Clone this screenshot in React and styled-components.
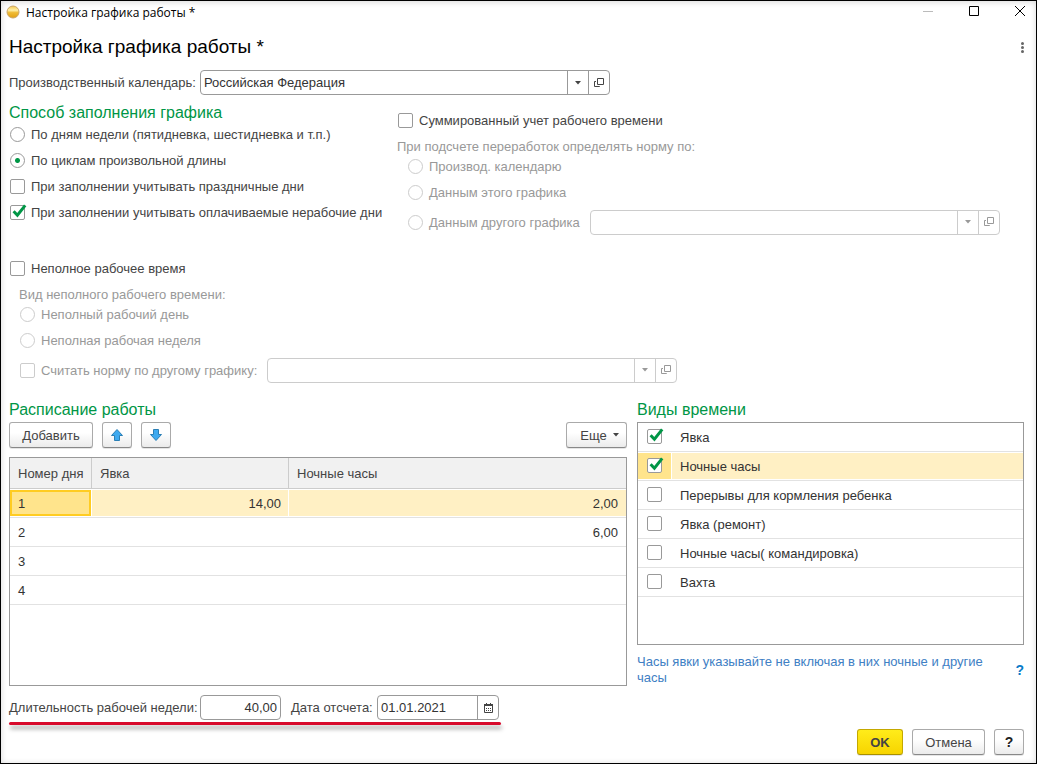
import React, { useState } from "react";
import styled, { createGlobalStyle } from "styled-components";

const initialDays = [
  { day: "1", work: "14,00", night: "2,00" },
  { day: "2", work: "", night: "6,00" },
  { day: "3", work: "", night: "" },
  { day: "4", work: "", night: "" },
];

const initialTypes = [
  { name: "Явка", checked: true },
  { name: "Ночные часы", checked: true },
  { name: "Перерывы для кормления ребенка", checked: false },
  { name: "Явка (ремонт)", checked: false },
  { name: "Ночные часы( командировка)", checked: false },
  { name: "Вахта", checked: false },
];

function CheckMark(props) {
  return (
    <Mark>
      <CheckInput type="checkbox" {...props} />
      <Tick viewBox="0 0 18 18" aria-hidden="true">
        <path d="M3.6 8.2 L7.4 12.2 L15.2 2.4" />
      </Tick>
    </Mark>
  );
}

function Check({ label, ...rest }) {
  return (
    <CheckLabel $disabled={rest.disabled}>
      <CheckMark {...rest} />
      {label}
    </CheckLabel>
  );
}

function Radio({ label, ...rest }) {
  return (
    <CheckLabel $disabled={rest.disabled}>
      <RadioInput type="radio" {...rest} />
      {label}
    </CheckLabel>
  );
}

function OpenIcon() {
  return (
    <svg width="10" height="10" viewBox="0 0 10 10" fill="none" stroke="currentColor">
      <path d="M3.5 0.5h6v6h-6z" />
      <path d="M2 3.5H0.5v5h5V8" />
    </svg>
  );
}

function CaretIcon() {
  return (
    <svg width="6" height="4" viewBox="0 0 6 4" fill="currentColor">
      <path d="M0 0h6L3 3.5z" />
    </svg>
  );
}

function CalendarIcon() {
  return (
    <svg width="9" height="10" viewBox="0 0 9 10" fill="none" stroke="currentColor">
      <path d="M0 1.5h9M0 2.5h9" />
      <path d="M2.5 0v2M6.5 0v2" />
      <path d="M0.5 2v7.5h8V2" />
      <path d="M2 5.5h5M2 7.5h5" strokeDasharray="1 1" />
    </svg>
  );
}

function ArrowIcon({ down }) {
  return (
    <svg width="14" height="14" viewBox="0 0 14 14">
      <path
        d={
          down
            ? "M4.5 1.5h5v5h3L7 12.5 1.5 6.5h3z"
            : "M4.5 12.5h5v-5h3L7 1.5 1.5 7.5h3z"
        }
        fill="#3eaaf0"
        stroke="#2b7fb5"
      />
    </svg>
  );
}

function RefField({ id, label, value, disabled }) {
  return (
    <Field $disabled={disabled}>
      <FieldInput
        id={id}
        aria-label={label}
        defaultValue={value}
        disabled={disabled}
      />
      <FieldButton aria-label="Выбрать из списка" disabled={disabled}>
        <CaretIcon />
      </FieldButton>
      <FieldButton aria-label="Открыть" disabled={disabled}>
        <OpenIcon />
      </FieldButton>
    </Field>
  );
}

export default function App() {
  const [mode, setMode] = useState("cycles");
  const [selectedDay, setSelectedDay] = useState(0);
  const [selectedType, setSelectedType] = useState(1);
  const [types, setTypes] = useState(initialTypes);

  const toggleType = (index) => {
    setSelectedType(index);
    setTypes(
      types.map((t, i) => (i === index ? { ...t, checked: !t.checked } : t))
    );
  };

  return (
    <Window>
      <GlobalStyle />
      <TitleBar>
        <Logo viewBox="0 0 14 14" aria-hidden="true">
          <defs>
            <linearGradient id="ball" x1="0" y1="0" x2="0" y2="1">
              <stop offset="0" stopColor="#f3c64c" />
              <stop offset="0.35" stopColor="#fff0a8" />
              <stop offset="0.55" stopColor="#efbb35" />
              <stop offset="1" stopColor="#e2a012" />
            </linearGradient>
          </defs>
          <circle cx="7" cy="7" r="6" fill="url(#ball)" stroke="#c9a56a" />
        </Logo>
        <TitleText>Настройка графика работы *</TitleText>
        <WindowButton aria-label="Свернуть" $muted>
          <svg width="12" height="12" viewBox="0 0 12 12" stroke="currentColor">
            <path d="M1 5.5h10" />
          </svg>
        </WindowButton>
        <WindowButton aria-label="Развернуть">
          <svg width="12" height="12" viewBox="0 0 12 12" fill="none" stroke="currentColor">
            <path d="M1.5 0.5h9v9h-9z" />
          </svg>
        </WindowButton>
        <WindowButton aria-label="Закрыть">
          <svg width="12" height="12" viewBox="0 0 12 12" stroke="currentColor">
            <path d="M1 0l10 10M11 0L1 10" />
          </svg>
        </WindowButton>
      </TitleBar>

      <Content>
        <HeadingRow>
          <Heading>Настройка графика работы *</Heading>
          <MoreButton aria-label="Еще действия">
            <svg width="3" height="11" viewBox="0 0 3 11" fill="currentColor">
              <circle cx="1.5" cy="1.5" r="1.5" />
              <circle cx="1.5" cy="5.5" r="1.5" />
              <circle cx="1.5" cy="9.5" r="1.5" />
            </svg>
          </MoreButton>
        </HeadingRow>

        <CalendarRow>
          <FieldLabel htmlFor="calendar" $width={191}>
            Производственный календарь:
          </FieldLabel>
          <RefField id="calendar" value="Российская Федерация" />
        </CalendarRow>

        <Options>
          <Column>
            <SectionTitle>Способ заполнения графика</SectionTitle>
            <Row>
              <Radio
                name="mode"
                label="По дням недели (пятидневка, шестидневка и т.п.)"
                checked={mode === "week"}
                onChange={() => setMode("week")}
              />
            </Row>
            <Row>
              <Radio
                name="mode"
                label="По циклам произвольной длины"
                checked={mode === "cycles"}
                onChange={() => setMode("cycles")}
              />
            </Row>
            <Row>
              <Check label="При заполнении учитывать праздничные дни" />
            </Row>
            <Row>
              <Check
                label="При заполнении учитывать оплачиваемые нерабочие дни"
                defaultChecked
              />
            </Row>
          </Column>
          <SummaryColumn>
            <Row>
              <Check label="Суммированный учет рабочего времени" />
            </Row>
            <GroupLabel>При подсчете переработок определять норму по:</GroupLabel>
            <Nested>
              <Row>
                <Radio name="norm" label="Производ. календарю" disabled />
              </Row>
              <Row>
                <Radio name="norm" label="Данным этого графика" disabled />
              </Row>
              <FieldRow>
                <Radio name="norm" label="Данным другого графика" disabled />
                <RefField label="Другой график" disabled />
              </FieldRow>
            </Nested>
          </SummaryColumn>
        </Options>

        <PartTime>
          <Row>
            <Check label="Неполное рабочее время" />
          </Row>
          <Nested>
            <GroupLabel>Вид неполного рабочего времени:</GroupLabel>
            <Row>
              <Radio name="part" label="Неполный рабочий день" disabled />
            </Row>
            <Row>
              <Radio name="part" label="Неполная рабочая неделя" disabled />
            </Row>
            <FieldRow>
              <Check label="Считать норму по другому графику:" disabled />
              <RefField label="График для нормы" disabled />
            </FieldRow>
          </Nested>
        </PartTime>

        <Workspace>
          <Column>
            <SectionTitle>Расписание работы</SectionTitle>
            <Toolbar>
              <Button $width={84}>Добавить</Button>
              <Button $width={30} aria-label="Переместить вверх">
                <ArrowIcon />
              </Button>
              <Button $width={30} aria-label="Переместить вниз">
                <ArrowIcon down />
              </Button>
              <MenuButton $width={61}>
                Еще
                <CaretIcon />
              </MenuButton>
            </Toolbar>
            <TableFrame>
              <Table>
                <colgroup>
                  <col width="82" />
                  <col width="197" />
                  <col />
                </colgroup>
                <thead>
                  <tr>
                    <Th>Номер дня</Th>
                    <Th>Явка</Th>
                    <Th>Ночные часы</Th>
                  </tr>
                </thead>
                <tbody>
                  {initialDays.map((row, i) => (
                    <Tr
                      key={row.day}
                      $selected={i === selectedDay}
                      onClick={() => setSelectedDay(i)}
                    >
                      <Td>{row.day}</Td>
                      <Td $number>{row.work}</Td>
                      <Td $number>{row.night}</Td>
                    </Tr>
                  ))}
                </tbody>
              </Table>
            </TableFrame>
          </Column>

          <Column>
            <SectionTitle>Виды времени</SectionTitle>
            <TypeList>
              {types.map((type, i) => (
                <TypeItem key={type.name} $selected={i === selectedType}>
                  <TypeLabel>
                    <TypeMark $selected={i === selectedType}>
                      <CheckMark
                        checked={type.checked}
                        onChange={() => toggleType(i)}
                      />
                    </TypeMark>
                    <TypeName>{type.name}</TypeName>
                  </TypeLabel>
                </TypeItem>
              ))}
            </TypeList>
            <Note>
              <NoteText>
                Часы явки указывайте не включая в них ночные и другие часы
              </NoteText>
              <HelpLink href="#help">?</HelpLink>
            </Note>
          </Column>
        </Workspace>

        <Totals>
          <TotalsRow>
            <FieldLabel htmlFor="duration" $width={191}>
              Длительность рабочей недели:
            </FieldLabel>
            <NumberField>
              <FieldInput id="duration" defaultValue="40,00" $number />
            </NumberField>
            <DateLabel htmlFor="start">Дата отсчета:</DateLabel>
            <DateField>
              <FieldInput id="start" defaultValue="01.01.2021" />
              <FieldButton aria-label="Открыть календарь">
                <CalendarIcon />
              </FieldButton>
            </DateField>
          </TotalsRow>
          <Underline />
        </Totals>

        <Footer>
          <OkButton $width={46}>OK</OkButton>
          <Button $width={73}>Отмена</Button>
          <HelpButton $width={30}>?</HelpButton>
        </Footer>
      </Content>
    </Window>
  );
}

const GlobalStyle = createGlobalStyle`
  * {
    box-sizing: border-box;
  }
  body {
    margin: 0;
    background: #fff;
    color: #444;
    font-family: "Liberation Sans", Arial, sans-serif;
    font-size: 13px;
    line-height: 17px;
  }
  button, input {
    font: inherit;
    color: inherit;
    margin: 0;
  }
`;

const Window = styled.div`
  min-height: 100vh;
  display: flex;
  flex-direction: column;
  border: 1px solid #000;
  box-shadow: inset 0 1px 6px rgba(0, 0, 0, 0.16);
`;

const TitleBar = styled.header`
  height: 22px;
  display: flex;
  align-items: center;
  gap: 32px;
  padding: 0 9px 0 5px;
`;
const Logo = styled.svg`
  width: 14px;
  height: 14px;
  margin-right: -26px;
`;
const TitleText = styled.span`
  flex: 1;
  font-family: "Open Sans", "Noto Sans", sans-serif;
  font-size: 12px;
  color: #000;
`;
const WindowButton = styled.button`
  width: 14px;
  height: 14px;
  display: flex;
  align-items: center;
  justify-content: center;
  padding: 0;
  border: none;
  background: none;
  color: ${(props) => (props.$muted ? "#bbb" : "#000")};
`;

const Content = styled.main`
  flex: 1;
  display: flex;
  flex-direction: column;
  padding: 12px 12px 8px 8px;
`;
const HeadingRow = styled.div`
  display: flex;
  align-items: center;
  justify-content: space-between;
  height: 24px;
`;
const Heading = styled.h1`
  margin: 0;
  font-size: 19px;
  font-weight: normal;
  line-height: 24px;
  color: #000;
`;
const MoreButton = styled.button`
  display: flex;
  padding: 0;
  border: none;
  background: none;
  color: #666;
`;

const CalendarRow = styled.div`
  display: flex;
  align-items: center;
  margin-top: 11px;
`;
const FieldLabel = styled.label`
  width: ${(props) => props.$width}px;
  white-space: nowrap;
`;
const Field = styled.div`
  width: 410px;
  height: 25px;
  display: flex;
  border: 1px solid ${(props) => (props.$disabled ? "#ccc" : "#999")};
  border-radius: 4px;
  background: #fff;
  color: ${(props) => (props.$disabled ? "#999" : "#444")};
  overflow: hidden;
`;
const NumberField = styled(Field)`
  width: 81px;
`;
const DateField = styled(Field)`
  width: 122px;
`;
const FieldInput = styled.input`
  flex: 1;
  min-width: 0;
  padding: 0 3px;
  border: none;
  outline: none;
  background: none;
  color: #333;
  text-align: ${(props) => (props.$number ? "right" : "left")};
`;
const FieldButton = styled.button`
  width: 21px;
  display: flex;
  align-items: center;
  justify-content: center;
  padding: 0;
  border: none;
  border-left: 1px solid #999;
  background: none;

  &:disabled {
    border-color: #ccc;
    color: #999;
  }
`;

const Options = styled.div`
  display: grid;
  grid-template-columns: 388px 1fr;
  margin-top: 8px;
`;
const Column = styled.section`
  display: flex;
  flex-direction: column;
  min-width: 0;
`;
const SummaryColumn = styled(Column)`
  padding-top: 4px;
`;
const SectionTitle = styled.h2`
  height: 18px;
  margin: 0;
  font-size: 16px;
  font-weight: normal;
  line-height: 20px;
  color: #009646;
`;
const Row = styled.div`
  height: 26px;
  display: flex;
  align-items: center;
`;
const FieldRow = styled(Row)`
  height: 34px;
  gap: 10px;
`;
const Nested = styled.div`
  padding-left: 10px;
`;
const GroupLabel = styled.div`
  height: 20px;
  padding-top: 5px;
  color: #999;
`;
const PartTime = styled.section`
  margin-top: 16px;
`;

const CheckLabel = styled.label`
  display: flex;
  align-items: center;
  gap: 6px;
  padding-left: 1px;
  white-space: nowrap;
  color: ${(props) => (props.$disabled ? "#999" : "#444")};
`;
const Mark = styled.span`
  position: relative;
  display: flex;
`;
const CheckInput = styled.input`
  appearance: none;
  width: 15px;
  height: 15px;
  border: 1px solid #999;
  border-radius: 2px;
  background: #fff;

  &:disabled {
    border-color: #ccc;
  }
`;
const Tick = styled.svg`
  position: absolute;
  left: 0;
  top: -2px;
  width: 18px;
  height: 18px;
  fill: none;
  stroke: #009646;
  stroke-width: 3;
  pointer-events: none;
  visibility: hidden;

  input:checked + & {
    visibility: visible;
  }
`;
const RadioInput = styled.input`
  appearance: none;
  width: 15px;
  height: 15px;
  border: 1px solid #999;
  border-radius: 50%;
  background: #fff;

  &:checked {
    background: radial-gradient(circle, #009646 2px, #fff 3px);
  }
  &:disabled {
    border-color: #ccc;
  }
`;

const Workspace = styled.div`
  flex: 1;
  display: grid;
  grid-template-columns: 618fr 387fr;
  gap: 10px;
  margin-top: 13px;
`;
const Toolbar = styled.div`
  display: flex;
  gap: 9px;
  margin: 4px 0 9px;
`;
const Button = styled.button`
  min-width: ${(props) => props.$width}px;
  height: 26px;
  display: flex;
  align-items: center;
  justify-content: center;
  padding: 0;
  border: 1px solid #aaa;
  border-bottom-color: #888;
  border-radius: 3px;
  background: linear-gradient(#fff 40%, #ebebeb);
  box-shadow: 0 1px 0 rgba(0, 0, 0, 0.1);
`;
const MenuButton = styled(Button)`
  gap: 6px;
  padding-left: 6px;
  margin-left: auto;
`;
const OkButton = styled(Button)`
  border-color: #c4a800;
  border-bottom-color: #a89000;
  background: linear-gradient(#ffec1a, #f7d400);
  font-weight: bold;
`;
const HelpButton = styled(Button)`
  font-size: 14px;
  font-weight: bold;
  color: #222;
`;

const TableFrame = styled.div`
  flex: 1;
  border: 1px solid #999;
`;
const Table = styled.table`
  width: 100%;
  table-layout: fixed;
  border-collapse: separate;
  border-spacing: 0;
`;
const Th = styled.th`
  height: 31px;
  padding: 0 8px;
  border-right: 1px solid #ccc;
  border-bottom: 1px solid #ccc;
  background: #f1f1f1;
  font-weight: normal;
  text-align: left;
  white-space: nowrap;

  &:last-child {
    border-right: none;
  }
`;
const Td = styled.td`
  height: 29px;
  padding: 0 8px;
  border-bottom: 1px solid #e2e2e2;
  color: #333;
  text-align: ${(props) => (props.$number ? "right" : "left")};
`;
const Tr = styled.tr`
  ${(props) =>
    props.$selected &&
    `
    ${Td} {
      background: #fff0c4;
      box-shadow: inset -1px 0 #fff, inset 0 1px #fff, inset 0 -1px #fff;
    }
    ${Td}:first-child {
      background: #ffe48c;
      box-shadow: inset -1px 0 #fff, inset 0 1px #fff, inset 0 -1px #fff,
        inset -3px 0 #fc2, inset 2px 0 #fc2, inset 0 3px #fc2, inset 0 -3px #fc2;
    }
    ${Td}:last-child {
      box-shadow: inset 0 1px #fff, inset 0 -1px #fff;
    }
  `}
`;

const TypeList = styled.ul`
  flex: 1;
  min-height: 223px;
  margin: 4px 0 0;
  padding: 0;
  border: 1px solid #999;
  list-style: none;
`;
const TypeItem = styled.li`
  height: 29px;
  padding: 1px 0;
  border-bottom: 1px solid #e2e2e2;
  background: ${(props) => (props.$selected ? "#fff0c4" : "#fff")};
  background-clip: content-box;
`;
const TypeLabel = styled.label`
  height: 100%;
  display: flex;
  align-items: center;
`;
const TypeMark = styled.span`
  width: 34px;
  height: 100%;
  display: flex;
  align-items: center;
  padding: 0 0 2px 9px;
  border-right: 1px solid #fff;
  background: ${(props) => (props.$selected ? "#ffe48c" : "#fff")};
`;
const TypeName = styled.span`
  padding-left: 8px;
  color: #333;
`;
const Note = styled.div`
  display: flex;
  align-items: center;
  justify-content: space-between;
  margin-top: 9px;
  line-height: 16px;
  color: #4080c4;
`;
const NoteText = styled.p`
  max-width: 360px;
  margin: 0;
`;
const HelpLink = styled.a`
  font-size: 14px;
  font-weight: bold;
  color: #0a7bc8;
  text-decoration: none;
`;

const Totals = styled.div`
  align-self: flex-start;
  margin-top: 9px;
`;
const TotalsRow = styled.div`
  display: flex;
  align-items: center;
  padding-right: 2px;
`;
const DateLabel = styled.label`
  width: 96px;
  padding-left: 10px;
  white-space: nowrap;
`;
const Underline = styled.div`
  height: 3px;
  margin-top: 2px;
  border-radius: 2px;
  background: #d80a2c;
  box-shadow: 1px 4px 4px rgba(0, 0, 0, 0.35);
`;

const Footer = styled.footer`
  display: flex;
  justify-content: flex-end;
  gap: 9px;
  margin-top: 4px;
`;
